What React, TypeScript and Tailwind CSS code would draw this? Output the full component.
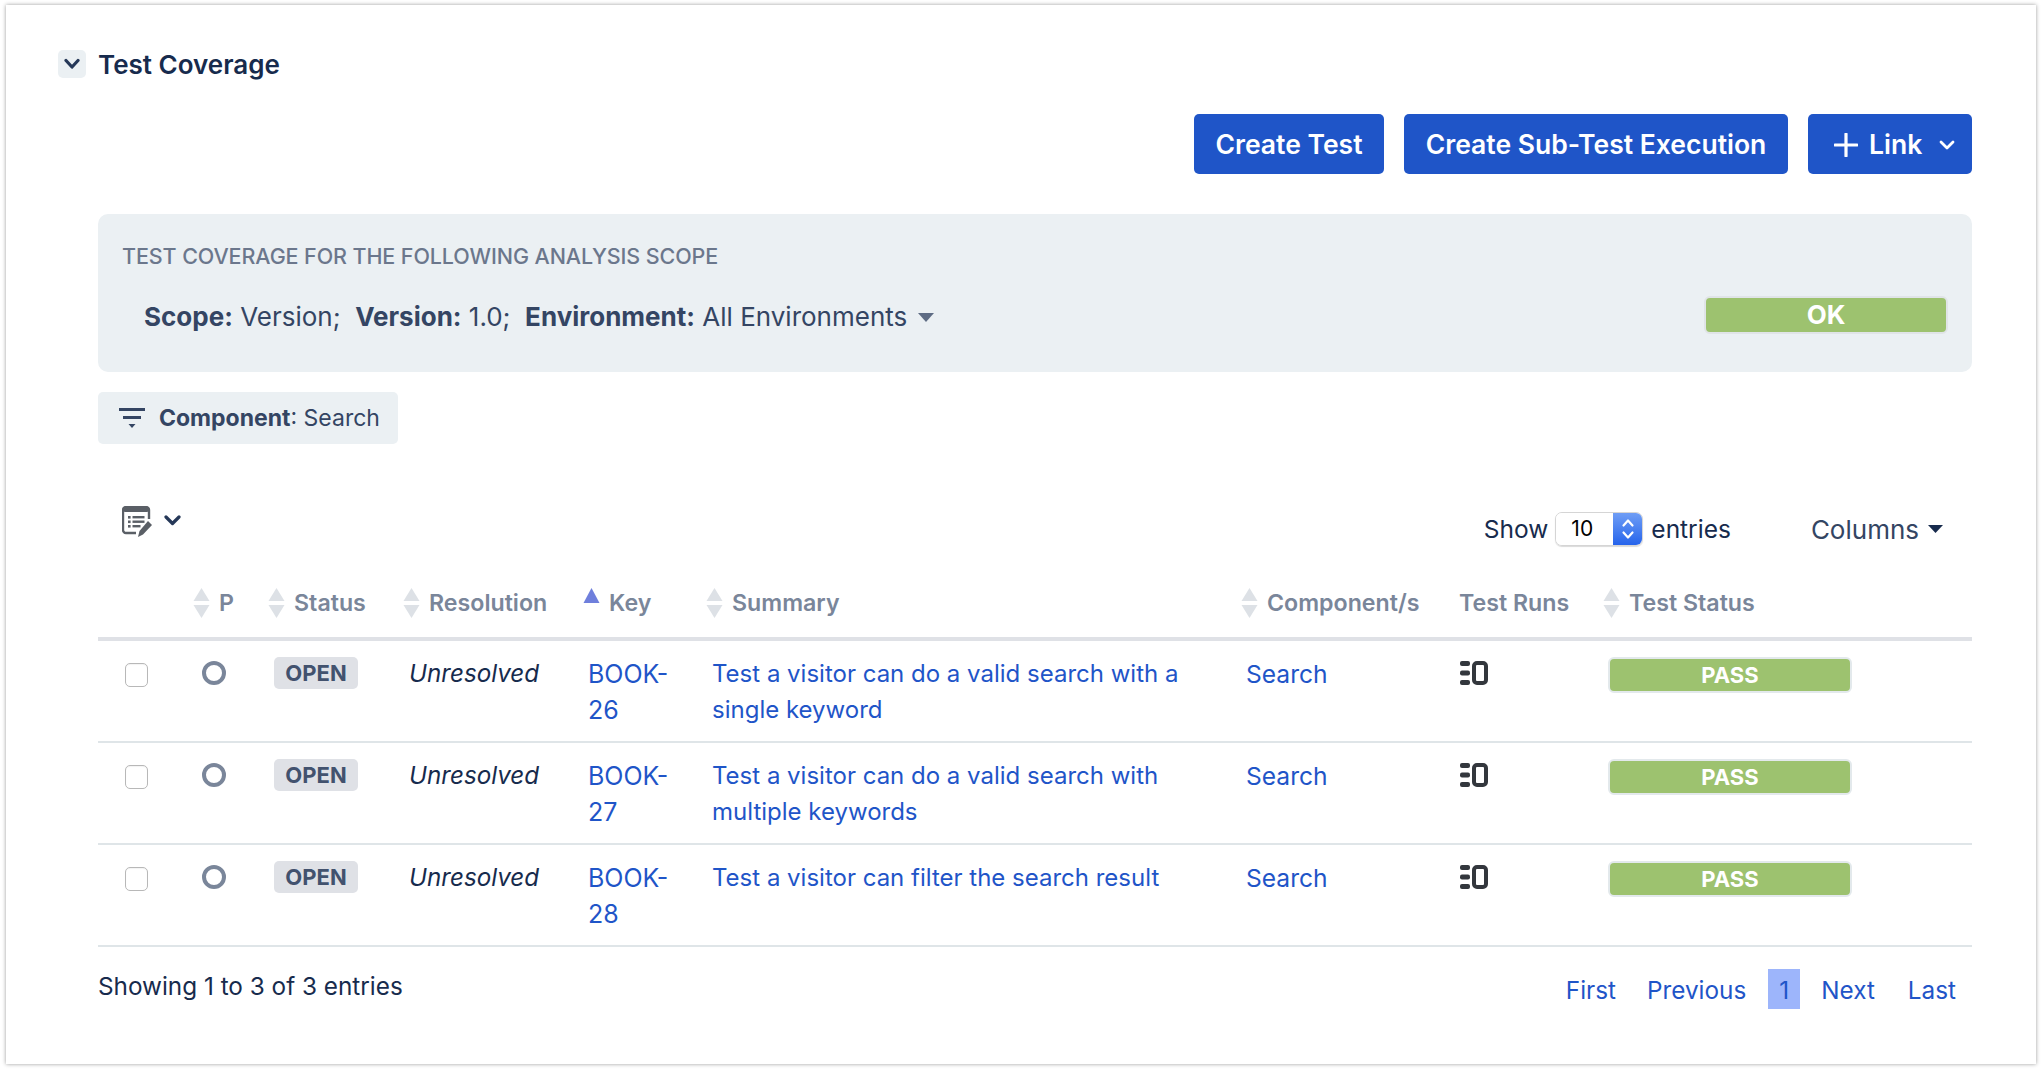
import React from "react";

const font = { fontFamily: "Inter, 'Liberation Sans', sans-serif" };
const gridCols = "grid grid-cols-[95px_75px_135px_180px_123px_535px_218px_144px_369px]";

function SortArrows() {
  return (
    <svg width="17" height="30" viewBox="0 0 17 30" className="shrink-0">
      <path d="M8.5 0 L16.5 13 H0.5 Z" fill="#dde1e6" />
      <path d="M8.5 30 L16.5 17 H0.5 Z" fill="#dde1e6" />
    </svg>
  );
}

function Head({ label, sort = true, active = false }: { label: string; sort?: boolean; active?: boolean }) {
  return (
    <div className="flex items-center gap-[9px] text-[23.2px] leading-[30px] font-semibold text-[#7a869a]">
      {active ? (
        <svg width="17" height="30" viewBox="0 0 17 30" className="shrink-0">
          <path d="M8.5 0 L16.5 15 H0.5 Z" fill="#6f7fdc" />
        </svg>
      ) : sort ? (
        <SortArrows />
      ) : null}
      <span>{label}</span>
    </div>
  );
}

function RunsIcon() {
  return (
    <svg width="28" height="24" viewBox="0 0 28 24">
      <g fill="#33373d">
        <rect x="0" y="0" width="10" height="5" rx="2" />
        <rect x="0" y="9.5" width="10" height="5" rx="2" />
        <rect x="0" y="19" width="10" height="5" rx="2" />
      </g>
      <rect x="14" y="2" width="12" height="20" rx="3" fill="none" stroke="#33373d" strokeWidth="4" />
    </svg>
  );
}

function Row({ k, s1, s2 }: { k: string; s1: string; s2?: string }) {
  return (
    <div className={`${gridCols} h-[102px] border-b-2 border-[#dfe5e8] pt-[16px] items-start`}>
      <div className="pl-[27px] pt-[6px]">
        <div className="w-[23px] h-[24px] rounded-[5px] bg-white border border-[#b8b8b8] shadow-[inset_0_1px_1px_rgba(0,0,0,0.05)]" />
      </div>
      <div className="pl-[9px] pt-[4px]">
        <div className="w-[24px] h-[24px] rounded-full border-[4.5px] border-[#7a869a]" />
      </div>
      <div className="pl-[6px]">
        <span className="inline-flex items-center justify-center w-[84px] h-[32px] rounded-[5px] bg-[#dfe1e6] text-[22px] font-bold text-[#42526e]">OPEN</span>
      </div>
      <div className="pl-[6px] -mt-[1px] text-[24.2px] leading-[36px] italic text-[#172b4d]">Unresolved</div>
      <div className="pl-[5px] -mt-[1px] pr-[6px] text-[25px] leading-[36px] text-[#1f55c8] w-[110px]">{k}</div>
      <div className="pl-[6px] -mt-[1px] pr-[20px] text-[24px] leading-[36px] text-[#1f55c8]">
        {s1}
        {s2 ? <br /> : null}
        {s2}
      </div>
      <div className="pl-[5px] -mt-[1px] text-[24.6px] leading-[36px] text-[#1f55c8]">Search</div>
      <div className="pl-[1px] pt-[4px]"><RunsIcon /></div>
      <div className="pl-[5px]">
        <div className="w-[244px] h-[36px] rounded-[6px] bg-[#9dc26f] border-2 border-[#e3e9ec] flex items-center justify-center text-[22px] font-bold text-white">PASS</div>
      </div>
    </div>
  );
}

export default function App() {
  return (
    <div className="w-[2042px] h-[1070px] bg-white pt-[5px] pl-[6px] overflow-hidden" style={font}>
      <div className="w-[2030px] h-[1059px] bg-white shadow-[0_0_4px_rgba(0,0,0,0.4)] pl-[92px] pr-[64px] pt-[45px] relative">
        <div className="flex items-center h-[28px] -ml-[40px] gap-[12px]">
          <div className="w-[28px] h-[28px] rounded-[5px] bg-[#ebf0f3] flex items-center justify-center">
            <svg width="16" height="12" viewBox="0 0 16 12"><path d="M2 2.5 L8 9 L14 2.5" fill="none" stroke="#253858" strokeWidth="3.2" strokeLinecap="round" strokeLinejoin="round" /></svg>
          </div>
          <div className="text-[26px] font-semibold text-[#172b4d]">Test Coverage</div>
        </div>

        <div className="flex justify-end gap-[20px] mt-[36px]">
          <div className="h-[60px] w-[190px] pt-[2px] rounded-[5px] bg-[#1f55c8] text-white text-[26.5px] font-semibold flex items-center justify-center">Create Test</div>
          <div className="h-[60px] w-[384px] pt-[2px] rounded-[5px] bg-[#1f55c8] text-white text-[26.5px] font-semibold flex items-center justify-center">Create Sub-Test Execution</div>
          <div className="h-[60px] w-[164px] pt-[2px] rounded-[5px] bg-[#1f55c8] text-white text-[26.5px] font-semibold flex items-center pl-[26px] gap-[11px]">
            <svg width="24" height="24" viewBox="0 0 24 24"><path d="M12 1 V23 M1 12 H23" stroke="#fff" strokeWidth="3.2" strokeLinecap="round" /></svg>
            <span>Link</span>
            <svg className="ml-[6px]" width="16" height="12" viewBox="0 0 16 12"><path d="M2 3 L8 9 L14 3" fill="none" stroke="#fff" strokeWidth="2.8" strokeLinecap="round" strokeLinejoin="round" /></svg>
          </div>
        </div>

        <div className="mt-[40px] h-[158px] rounded-[10px] bg-[#ebf0f3] pl-[24px] pr-[24px] pt-[29px] relative">
          <div className="text-[21.5px] leading-[26px] font-medium text-[#6b778c] uppercase tracking-[-0.1px]">Test coverage for the following analysis scope</div>
          <div className="flex items-center justify-between mt-[30px]">
            <div className="pl-[22px] flex items-center text-[26px] leading-[36px] text-[#344563] whitespace-pre">
              <b className="font-bold">Scope:</b> Version;  <b className="font-bold">Version:</b> 1.0;  <b className="font-bold">Environment:</b> All Environments
              <svg className="ml-[11px]" width="16" height="9" viewBox="0 0 16 9"><path d="M0 0 H16 L8 9 Z" fill="#5e6c84" /></svg>
            </div>
            <div className="w-[244px] h-[38px] -mt-[5px] rounded-[6px] bg-[#9dc26f] border-2 border-[#e0e4e7] flex items-center justify-center text-[26px] font-bold text-white">OK</div>
          </div>
        </div>

        <div className="mt-[20px] w-[300px] h-[52px] rounded-[5px] bg-[#ebf0f3] flex items-center pl-[21px] gap-[14px] text-[23px] text-[#344563]">
          <svg width="26" height="20" viewBox="0 0 26 20"><g fill="#344563"><rect x="0" y="0" width="26" height="3" /><rect x="4" y="8" width="18" height="3" /><path d="M9.5 16 H16.5 L13 20 Z" /></g></svg>
          <span><b className="font-bold">Component</b>: Search</span>
        </div>

        <div className="flex mt-[60px] h-[68px] relative">
          <div className="flex items-start ml-[24px] gap-[10px] mt-[2px]">
            <svg width="32" height="32" viewBox="0 0 32 32">
              <path d="M14 27 H4 a3 3 0 0 1 -3 -3 V4 a3 3 0 0 1 3 -3 H24 a3 3 0 0 1 3 3 V13" fill="none" stroke="#5a5f66" strokeWidth="2.4" />
              <rect x="1" y="1" width="26" height="5" fill="#5a5f66" rx="2" />
              <g fill="#5a5f66">
                <rect x="6" y="10" width="2.6" height="2.6" /><rect x="10.5" y="10" width="12" height="2.4" />
                <rect x="6" y="14.5" width="2.6" height="2.6" /><rect x="10.5" y="14.5" width="12" height="2.4" />
                <rect x="6" y="19" width="2.6" height="2.6" /><rect x="10.5" y="19" width="8" height="2.4" />
                <path d="M26 15 L30 19 L21 28.5 L16 31 L17.5 25 Z" />
              </g>
            </svg>
            <svg className="mt-[9px]" width="17" height="11" viewBox="0 0 17 11"><path d="M2 2 L8.5 8.5 L15 2" fill="none" stroke="#253858" strokeWidth="3.2" strokeLinecap="round" strokeLinejoin="round" /></svg>
          </div>
          <div className="ml-auto flex items-center text-[24.5px] text-[#172b4d] h-[34px] mt-[8px] pr-[29px]">
            <span>Show</span>
            <div className="ml-[7px] flex w-[88px] h-[34px] rounded-[7px] overflow-hidden border border-[#d5d5d5] shadow-[0_1px_1px_rgba(0,0,0,0.15)]">
              <div className="flex-1 bg-white text-[21px] text-black flex items-center pl-[15px]">10</div>
              <div className="w-[29px] bg-gradient-to-b from-[#6f9df5] to-[#2563eb] flex items-center justify-center">
                <svg width="14" height="24" viewBox="0 0 14 24"><path d="M2.5 8.5 L7 3.5 L11.5 8.5 M2.5 15.5 L7 20.5 L11.5 15.5" fill="none" stroke="#fff" strokeWidth="2.2" strokeLinecap="round" strokeLinejoin="round" /></svg>
              </div>
            </div>
            <span className="ml-[8px]">entries</span>
            <span className="ml-[80px] text-[26px] text-[#344563]">Columns</span>
            <svg className="ml-[9px]" width="15" height="8" viewBox="0 0 15 8"><path d="M0 0 H15 L7.5 8 Z" fill="#172b4d" /></svg>
          </div>
        </div>

        <div className={`${gridCols} h-[69px] border-b-[4px] border-[#dfe1e6] items-start pt-[16px]`}>
          <div />
          <Head label="P" />
          <Head label="Status" />
          <Head label="Resolution" />
          <Head label="Key" active />
          <Head label="Summary" />
          <Head label="Component/s" />
          <Head label="Test Runs" sort={false} />
          <Head label="Test Status" />
        </div>

        <Row k="BOOK-26" s1="Test a visitor can do a valid search with a" s2="single keyword" />
        <Row k="BOOK-27" s1="Test a visitor can do a valid search with" s2="multiple keywords" />
        <Row k="BOOK-28" s1="Test a visitor can filter the search result" />

        <div className="flex items-start justify-between">
          <div className="mt-[21px] text-[24.3px] leading-[36px] text-[#172b4d]">Showing 1 to 3 of 3 entries</div>
          <div className="flex items-center mt-[22px] text-[24.3px] text-[#1f55c8] pr-[16px] h-[40px]">
            <span className="pt-[2px]">First</span>
            <span className="ml-[31px] pt-[2px]">Previous</span>
            <span className="ml-[22px] w-[32px] h-[40px] pt-[2px] bg-[#9db5fb] flex items-center justify-center">1</span>
            <span className="ml-[21px] pt-[2px]">Next</span>
            <span className="ml-[33px] pt-[2px]">Last</span>
          </div>
        </div>
      </div>
    </div>
  );
}
